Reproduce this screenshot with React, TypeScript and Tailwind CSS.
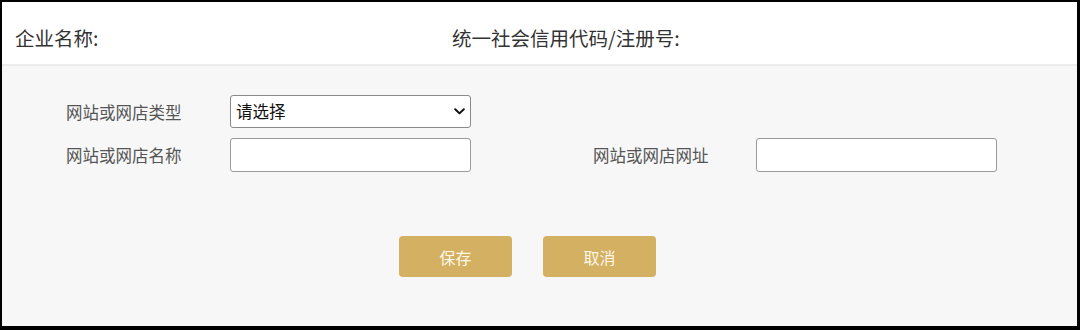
import React from "react";

const font = { fontFamily: '"Noto Sans CJK SC", "Noto Sans", sans-serif' };

function Chevron() {
  return (
    <svg width="11" height="7" viewBox="0 0 11 7" className="pointer-events-none absolute right-[6px] top-[13px]">
      <path d="M1.2 1.2 L5.5 5.4 L9.8 1.2" fill="none" stroke="#111" strokeWidth="2" strokeLinecap="round" strokeLinejoin="round" />
    </svg>
  );
}

export default function App() {
  return (
    <div className="w-[1080px] h-[330px] bg-black pt-[2px] pl-[2px] pr-[3px] pb-[4px]" style={font}>
      <div className="flex h-full flex-col bg-[#f7f7f7]">
        <div className="flex h-[64px] items-start bg-white pl-[13px] pt-[23px] text-[19.5px] leading-[26px] text-[#333] border-b-2 border-[#ececec]">
          <div className="w-[437px]">企业名称:</div>
          <div>统一社会信用代码/注册号:</div>
        </div>

        <div className="flex flex-col gap-[10px] pl-[64px] pt-[29px]">
          <div className="flex items-center">
            <label className="w-[164px] text-[16.5px] leading-[24px] text-[#555]">网站或网店类型</label>
            <div className="relative w-[241px]">
              <select className="h-[33px] w-full appearance-none rounded-[3px] border border-[#8a8a8a] bg-white pl-[5px] text-[16.5px] text-[#111] outline-none">
                <option>请选择</option>
              </select>
              <Chevron />
            </div>
          </div>
          <div className="flex items-center">
            <label className="w-[164px] text-[16.5px] leading-[24px] text-[#555]">网站或网店名称</label>
            <input className="h-[34px] w-[241px] rounded-[3px] border border-[#9a9a9a] bg-white outline-none" />
            <label className="ml-[122px] w-[163px] text-[16.5px] leading-[24px] text-[#555]">网站或网店网址</label>
            <input className="h-[34px] w-[241px] rounded-[3px] border border-[#9a9a9a] bg-white outline-none" />
          </div>
        </div>

        <div className="flex gap-[31px] pl-[397px] pt-[64px]">
          <button className="h-[41px] w-[113px] rounded-[4px] bg-[#d4b062] text-[16px] text-[#fff7e8]">保存</button>
          <button className="h-[41px] w-[113px] rounded-[4px] bg-[#d4b062] text-[16px] text-[#fff7e8]">取消</button>
        </div>
      </div>
    </div>
  );
}
